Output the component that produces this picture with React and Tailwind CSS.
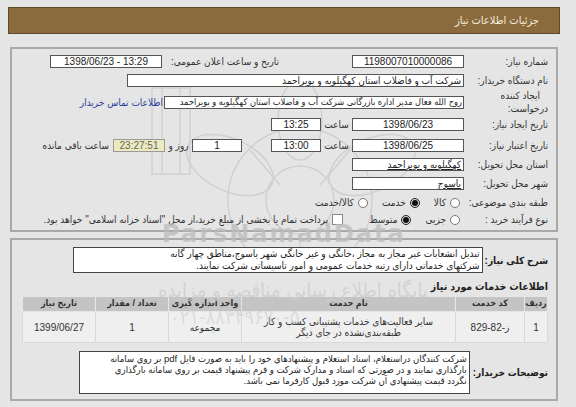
import React from "react";

const num = "[font-family:'Liberation_Sans','DejaVu_Sans_Condensed','DejaVu_Sans',sans-serif]";

function Label({ w = "w-[84px]", children, className = "" }) {
  return (
    <div className={`${w} shrink-0 text-[10px] text-[#333] whitespace-nowrap ${className}`}>
      {children}
    </div>
  );
}

function Box({ w, children, className = "", ltr }) {
  return (
    <div
      dir={ltr ? "ltr" : undefined}
      className={`${w} h-[13px] shrink-0 bg-white border border-[#555] text-[10px] leading-[11px] text-[#222] overflow-hidden whitespace-nowrap px-[2px] ${className}`}
    >
      {children}
    </div>
  );
}

function Radio({ checked, label }) {
  return (
    <div className="flex items-center gap-[4px]">
      <span
        className={`w-[10px] h-[10px] rounded-full border flex items-center justify-center ${
          checked ? "border-[#222] bg-[#ddd]" : "border-[#777] bg-white"
        }`}
      >
        {checked && <span className="w-[6px] h-[6px] rounded-full bg-[#111]" />}
      </span>
      <span className="text-[10px] text-[#333]">{label}</span>
    </div>
  );
}

function Watermark() {
  return (
    <svg
      className="absolute left-0 top-0 pointer-events-none"
      width="576"
      height="407"
      viewBox="0 0 576 407"
      fill="none"
      stroke="#d0d0d0"
      strokeWidth="1.5"
    >
      <rect x="152" y="88" width="38" height="86" />
      <line x1="162" y1="88" x2="162" y2="174" />
      <line x1="180" y1="88" x2="180" y2="174" />
      <circle cx="300" cy="200" r="34" />
      <circle cx="300" cy="200" r="72" />
      <ellipse cx="230" cy="165" rx="46" ry="26" transform="rotate(25 230 165)" />
      <ellipse cx="372" cy="165" rx="46" ry="26" transform="rotate(-25 372 165)" />
      <ellipse cx="300" cy="120" rx="22" ry="40" />
      <path d="M300 234 L300 262" />
      <path d="M250 150 L280 185 M350 150 L320 185" />
    </svg>
  );
}

export default function App() {
  return (
    <div
      dir="rtl"
      className={`relative w-[576px] h-[407px] overflow-hidden bg-[#e5e5e5] pt-[7px] ${num}`}
    >
      <Watermark />

      {/* header */}
      <div className="relative ml-[8px] mr-[16px] h-[27px] bg-[#8b6b3e] border border-[#5e4a2c] flex items-center pr-[20px] text-[11px] text-[#f4ecdc]">
        جزئیات اطلاعات نیاز
      </div>

      {/* main info panel */}
      <div className="relative mt-[13px] ml-[10px] mr-[18px] h-[185px] border-2 border-[#a9a9a9] pr-[8px] pt-[6px]">
        <div className="flex items-center h-[13px]">
          <Label>شماره نیاز:</Label>
          <Box w="w-[112px]" className="text-center" ltr>1198007010000086</Box>
          <div className="w-[73px]" />
          <Label w="w-[114px]">تاریخ و ساعت اعلان عمومی:</Label>
          <div className="w-[3px]" />
          <Box w="w-[112px]" className="text-center" ltr>1398/06/23 - 13:29</Box>
        </div>

        <div className="flex items-center h-[13px] mt-[6px]">
          <Label>نام دستگاه خریدار:</Label>
          <Box w="w-[337px]">شرکت آب و فاضلاب استان کهگیلویه و بویراحمد</Box>
        </div>

        <div className="flex items-center h-[26px] mt-[2px]">
          <Label className="leading-[13px] whitespace-normal">
            <div className="pr-[8px]">ایجاد کننده</div>
            <div>درخواست:</div>
          </Label>
          <Box w="w-[300px]" className="pr-[1px] !text-[9.2px]">
            روح الله فعال مدیر اداره بازرگانی شرکت آب و فاضلاب استان کهگیلویه و بویراحمد
          </Box>
          <span className="text-[10px] text-[#2b3b9c] whitespace-nowrap mr-[1px]">اطلاعات تماس خریدار</span>
        </div>

        <div className="flex items-center h-[13px] mt-[3px]">
          <Label>تاریخ ایجاد نیاز:</Label>
          <Box w="w-[112px]" className="text-center">1398/06/23</Box>
          <span className="w-[31px] text-center text-[10px] text-[#333]">ساعت</span>
          <Box w="w-[50px]" className="text-center">13:25</Box>
        </div>

        <div className="flex items-center h-[13px] mt-[8px]">
          <Label>تاریخ اعتبار نیاز:</Label>
          <Box w="w-[112px]" className="text-center">1398/06/25</Box>
          <span className="w-[31px] text-center text-[10px] text-[#333]">ساعت</span>
          <Box w="w-[50px]" className="text-center">13:00</Box>
          <div className="w-[29px]" />
          <Box w="w-[50px]" className="text-center">1</Box>
          <span className="w-[27px] text-center text-[10px] text-[#333]">روز و</span>
          <Box
            w="w-[52px]"
            className="text-center !bg-[#ecebbd] !border-[#999] !text-[#666]"
          >
            23:27:51
          </Box>
          <span className="mr-[4px] text-[10px] text-[#333] whitespace-nowrap">ساعت باقی مانده</span>
        </div>

        <div className="flex items-center h-[13px] mt-[6px]">
          <Label>استان محل تحویل:</Label>
          <Box w="w-[112px]" className="underline">کهگیلویه و بویراحمد</Box>
        </div>

        <div className="flex items-center h-[13px] mt-[6px]">
          <Label>شهر محل تحویل:</Label>
          <Box w="w-[112px]" className="underline">یاسوج</Box>
        </div>

        <div className="flex items-center h-[13px] mt-[6px]">
          <Label>طبقه بندی موضوعی:</Label>
          <div className="flex items-center gap-[14px] mr-[4px]">
            <Radio label="کالا" />
            <Radio checked label="خدمت" />
            <Radio label="کالا/خدمت" />
          </div>
        </div>

        <div className="flex items-center h-[13px] mt-[4px]">
          <Label>نوع فرآیند خرید :</Label>
          <div className="flex items-center gap-[14px] mr-[4px]">
            <Radio label="جزیی" />
            <Radio checked label="متوسط" />
          </div>
          <div className="flex items-center gap-[4px] mr-[26px]">
            <span className="w-[11px] h-[11px] border border-[#888] bg-white" />
            <span className="text-[10px] text-[#333] whitespace-nowrap">
              پرداخت تمام یا بخشی از مبلغ خرید،از محل "اسناد خزانه اسلامی" خواهد بود.
            </span>
          </div>
        </div>
      </div>

      {/* services panel */}
      <div className="relative mt-[6px] ml-[10px] mr-[18px] h-[163px] border-2 border-[#a9a9a9] pr-[8px] pt-[7px]">
        <div className="flex items-center gap-[2px]">
          <div className="shrink-0 text-[10px] font-bold text-[#222] whitespace-nowrap">
            شرح کلی نیاز:
          </div>
          <div className="w-[410px] h-[26px] bg-white border border-[#444] px-[2px] text-[10px] leading-[12px] text-[#222] overflow-hidden">
            <div className="whitespace-nowrap">
              تبدیل انشعابات غیر مجاز به مجاز ،خانگی و غیر خانگی شهر یاسوج،مناطق چهار گانه
            </div>
            <div className="whitespace-nowrap">
              شرکتهای خدماتی دارای رتبه خدمات عمومی و امور تاسیساتی شرکت نمایند.
            </div>
          </div>
        </div>

        <div className="mt-[7px] text-[10.5px] leading-[12px] font-bold text-[#222]">اطلاعات خدمات مورد نیاز</div>

        <table className="mt-[4px] w-[525px] table-fixed border-collapse text-[9px] text-[#333] text-center">
          <thead>
            <tr className="h-[15px] bg-[#c4c4c4] whitespace-nowrap">
              <th className="w-[23px] border border-[#e6e6e6] font-bold">ردیف</th>
              <th className="w-[69px] border border-[#e6e6e6] font-bold">کد خدمت</th>
              <th className="w-[214px] border border-[#e6e6e6] font-bold">نام خدمت</th>
              <th className="w-[73px] border border-[#e6e6e6] font-bold">واحد اندازه گیری</th>
              <th className="w-[73px] border border-[#e6e6e6] font-bold">تعداد / مقدار</th>
              <th className="w-[73px] border border-[#e6e6e6] font-bold">تاریخ نیاز</th>
            </tr>
          </thead>
          <tbody>
            <tr className="h-[31px] bg-[#efefef] text-[10px]">
              <td className="border border-[#d9d9d9]">1</td>
              <td className="border border-[#d9d9d9]">
                <span dir="ltr">829-82-ز</span>
              </td>
              <td className="border border-[#d9d9d9] leading-[11px]">
                <div>سایر فعالیت‌های خدمات پشتیبانی کسب و کار</div>
                <div>طبقه‌بندی‌نشده در جای دیگر</div>
              </td>
              <td className="border border-[#d9d9d9]">مجموعه</td>
              <td className="border border-[#d9d9d9]">1</td>
              <td className="border border-[#d9d9d9]">1399/06/27</td>
            </tr>
          </tbody>
        </table>

        <div className="flex items-center gap-[3px] mt-[8px]">
          <div className="shrink-0 text-[10px] font-bold text-[#222] whitespace-nowrap">
            توضیحات خریدار:
          </div>
          <div className="w-[391px] h-[43px] bg-white border border-[#444] px-[2px] pt-[1px] text-[9.5px] leading-[11px] text-[#222] overflow-hidden">
            <div className="whitespace-nowrap">
              شرکت کنندگان دراستعلام، اسناد استعلام و پیشنهادهای خود را باید به صورت فایل pdf بر روی سامانه
            </div>
            <div className="whitespace-nowrap">
              بارگذاری نمایند و در صورتی که اسناد و مدارک شرکت و فرم پیشنهاد قیمت بر روی سامانه بارگذاری
            </div>
            <div className="whitespace-nowrap">نگردد قیمت پیشنهادی آن شرکت مورد قبول کارفرما نمی باشد.</div>
          </div>
        </div>
      </div>

      {/* watermark texts */}
      <div dir="ltr" className="absolute left-[162px] top-[221px] text-[24px] leading-[26px] font-bold tracking-[2px] text-[#bdbdbd]/80 [font-family:'DejaVu_Sans',sans-serif] pointer-events-none">
        ParsNamadData
      </div>
      <div className="absolute left-[158px] top-[279px] text-[20px] leading-[22px] text-[#cdcdcd]/80 pointer-events-none">
        پایگاه اطلاع رسانی مناقصه و مزایده
      </div>
      <div dir="ltr" className="absolute left-[170px] top-[306px] text-[20px] leading-[22px] text-[#c8c8c8]/50 pointer-events-none">
        ۰۲۱-۸۸۳۴۹۶۷۰-۵
      </div>
    </div>
  );
}
